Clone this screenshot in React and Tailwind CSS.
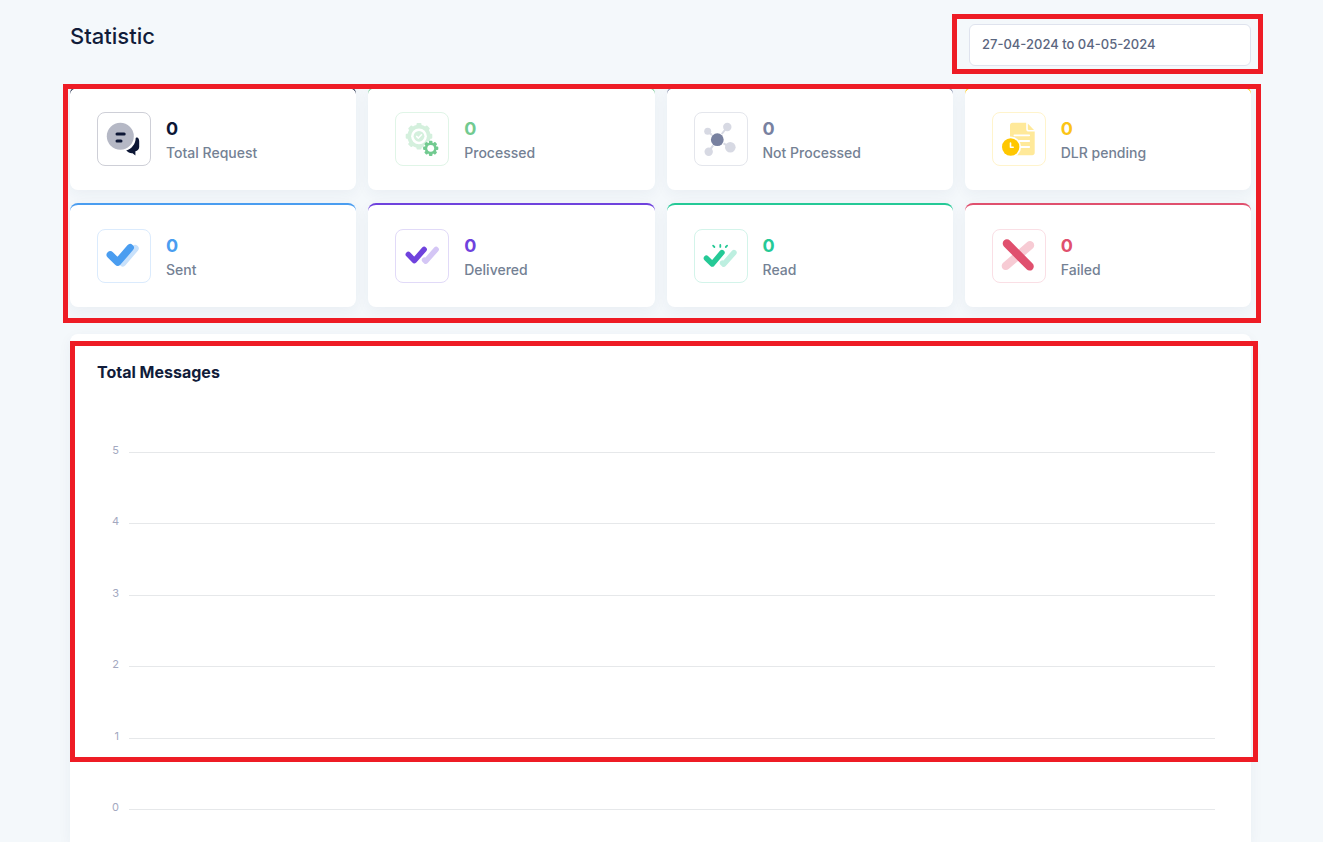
import { useState } from "react";

const TICKS = [5, 4, 3, 2, 1, 0];

const TEETH = [0, 45, 90, 135, 180, 225, 270, 315];

export default function App() {
  const [range, setRange] = useState("27-04-2024 to 04-05-2024");

  return (
    <main className="min-h-screen flex flex-col bg-[#f4f8fb] pl-[70px] pr-[72px] pt-6 font-['Inter',sans-serif] overflow-x-hidden">
      <header className="flex items-start justify-between mb-5">
        <h1 className="text-[22px] leading-6 font-medium text-[#111c3a]">
          Statistic
        </h1>

        <div className="relative w-[282px]">
          <input
            type="text"
            aria-label="Date range"
            value={range}
            onChange={(e) => setRange(e.target.value)}
            className="block w-full h-[42px] px-3 pb-0.5 rounded-md border border-[#dfe3ee] bg-white text-[13px] font-medium text-[#5b6680] outline-none"
          />
          <Highlight className="-left-[17px] -right-3 -top-[10px] -bottom-2" />
        </div>
      </header>

      <section className="relative grid grid-cols-4 gap-x-3 gap-y-[13px]">
        <StatCard label="Total Request" top="border-t-[#0c1635]" box="border-[#cecfd7]" text="text-[#0c1635]" icon={<ChatIcon />} />
        <StatCard label="Processed" top="border-t-[#72ca90]" box="border-[#e0f5e7]" text="text-[#72ca90]" icon={<GearsIcon />} />
        <StatCard label="Not Processed" top="border-t-[#7881a0]" box="border-[#e4e6ec]" text="text-[#7881a0]" icon={<NodesIcon />} />
        <StatCard label="DLR pending" top="border-t-[#ffc700]" box="border-[#fff4cc]" text="text-[#fbc416]" icon={<PendingIcon />} />
        <StatCard label="Sent" top="border-t-[#4a9df0]" box="border-[#dbebfd]" text="text-[#4a9df0]" icon={<SentIcon />} />
        <StatCard label="Delivered" top="border-t-[#6f42dd]" box="border-[#e1daf8]" text="text-[#6f42dd]" icon={<DeliveredIcon />} />
        <StatCard label="Read" top="border-t-[#25c996]" box="border-[#d3f4ea]" text="text-[#25c996]" icon={<ReadIcon />} />
        <StatCard label="Failed" top="border-t-[#e0506e]" box="border-[#fadfe5]" text="text-[#e0506e]" icon={<FailedIcon />} />
        <Highlight className="-left-[7px] -right-[10px] -top-0.5 -bottom-4" />
      </section>

      <section className="relative flex-1 mt-[27px] bg-white rounded-t-lg shadow-[0_4px_14px_rgba(30,60,90,0.05)] pt-7 pl-[27px] pr-9 pb-6">
        <h2 className="text-base leading-5 font-bold text-[#111c3a]">
          Total Messages
        </h2>

        <div className="mt-[63px] h-[372px] flex flex-col justify-between">
          {TICKS.map((tick) => (
            <div key={tick} className="flex items-center h-[15px]">
              <span className="w-[22px] mr-[10px] pb-1 text-right text-[11px] leading-[13px] text-[#a3a8bf]">
                {tick}
              </span>
              <div className="flex-1 border-t border-[#e6e8ea]" />
            </div>
          ))}
        </div>
        <Highlight className="left-0 -right-[7px] top-[7px] h-[421px]" />
      </section>
    </main>
  );
}

function Highlight({ className }) {
  return (
    <div
      className={`absolute z-10 border-5 border-[#ee1c25] pointer-events-none ${className}`}
    />
  );
}

function StatCard({ label, top, box, text, icon }) {
  return (
    <div
      className={`flex items-center gap-[15px] bg-white rounded-lg border-t-2 px-[27px] py-6 shadow-[0_4px_14px_rgba(30,60,90,0.05)] ${top}`}
    >
      <div className={`size-[54px] shrink-0 rounded-lg border ${box}`}>
        {icon}
      </div>
      <div className="pt-1">
        <p className={`text-lg leading-6 font-bold ${text}`}>0</p>
        <p className="text-sm leading-6 font-medium text-[#748194]">{label}</p>
      </div>
    </div>
  );
}

function Icon({ children }) {
  return (
    <svg
      viewBox="1 1 52 52"
      className="size-full"
      fill="none"
      strokeLinecap="round"
      strokeLinejoin="round"
      aria-hidden="true"
    >
      {children}
    </svg>
  );
}

function ChatIcon() {
  return (
    <Icon>
      <path
        d="M29.2 38.6C34.8 36.8 38.6 32 38.7 26C41 24.6 42.2 27 42.2 29.5V35C42.2 37.3 40.6 38.8 38.4 39.2V43.5L35.6 41.2C33 41.4 31 40.4 29.2 38.6Z"
        fill="#0c1635"
      />
      <circle cx="23.3" cy="24.3" r="13.5" fill="#b5b8c5" />
      <path d="M20 22H27.2M20 29H24" stroke="#0c1635" strokeWidth="3" />
    </Icon>
  );
}

function Gear({ x, y, r, tooth, color }) {
  return (
    <g transform={`translate(${x} ${y})`} fill={color}>
      <circle r={r - 1.7} />
      {TEETH.map((a) => (
        <rect
          key={a}
          x={-tooth / 2}
          y={-r}
          width={tooth}
          height={r / 2}
          rx="1"
          transform={`rotate(${a})`}
        />
      ))}
    </g>
  );
}

function GearsIcon() {
  return (
    <Icon>
      <Gear x={24} y={24.3} r={13.3} tooth={5} color="#d4f0dd" />
      <circle cx="24" cy="24.3" r="7.9" fill="#fff" />
      <circle cx="24" cy="24.3" r="5.4" fill="#d4f0dd" />
      <path d="M21.6 24.4L23.4 26.1L26.5 22.8" stroke="#fff" strokeWidth="1.5" />
      <circle cx="35.7" cy="36.3" r="7.6" fill="#fff" />
      <Gear x={35.7} y={36.3} r={7.6} tooth={3.6} color="#72ca90" />
      <circle cx="35.7" cy="36.3" r="3.4" fill="#fff" />
    </Icon>
  );
}

function NodesIcon() {
  return (
    <Icon>
      <path
        d="M13.7 19.3L23.3 27.7M33.3 15L23.3 27.7M14.7 39.7L23.3 27.7M36.3 35.3L23.3 27.7"
        stroke="#d7d9e3"
        strokeWidth="2"
      />
      <g fill="#d7d9e3">
        <circle cx="13.7" cy="19.3" r="3.5" />
        <circle cx="33.3" cy="15" r="4.2" />
        <circle cx="14.7" cy="39.7" r="4.2" />
        <circle cx="36.3" cy="35.3" r="5.3" />
      </g>
      <circle cx="23.3" cy="27.7" r="7.2" fill="#fff" />
      <circle cx="23.3" cy="27.7" r="6.4" fill="#7881a0" />
    </Icon>
  );
}

function PendingIcon() {
  return (
    <Icon>
      <path
        d="M20.5 10.7H34.2V17C34.2 18.8 35.2 19.6 37 19.6H42.7V40.8C42.7 42.3 41.7 43.3 40.2 43.3H20.5C19 43.3 18 42.3 18 40.8V13.2C18 11.7 19 10.7 20.5 10.7Z"
        fill="#ffe999"
      />
      <path d="M35.8 11.6L42 17.9H36.8C36.1 17.9 35.8 17.5 35.8 17Z" fill="#ffe999" />
      <path d="M22.4 23.3H37.2M27 29H37.2M29.5 35H37.2" stroke="#fff" strokeWidth="1.8" />
      <circle cx="18.7" cy="35" r="10.4" fill="#fff" />
      <circle cx="18.7" cy="35" r="8.7" fill="#ffc700" />
      <path d="M18.5 31V35.2H21.2" stroke="#fff" strokeWidth="1.6" />
    </Icon>
  );
}

function SentIcon() {
  return (
    <Icon>
      <path d="M38.2 19.4L25.8 34" stroke="#c8e1fb" strokeWidth="7" />
      <path d="M13.3 25.9L20.7 33.2L33.2 18.7" stroke="#4a9df0" strokeWidth="7.4" />
    </Icon>
  );
}

function DeliveredIcon() {
  return (
    <Icon>
      <path d="M41.2 20.4L30.7 32.2L29.5 31" stroke="#d4c6f5" strokeWidth="5.4" />
      <path d="M13.3 25.4L19.3 31.6L29.2 20.4" stroke="#fff" strokeWidth="7.4" />
      <path d="M13.3 25.4L19.3 31.6L29.2 20.4" stroke="#6f42dd" strokeWidth="5.4" />
    </Icon>
  );
}

function ReadIcon() {
  return (
    <Icon>
      <path d="M40 23.6L29.7 35.2L28.5 34" stroke="#bdefe0" strokeWidth="5.4" />
      <path d="M12.4 29.2L18.3 35L28 23.6" stroke="#fff" strokeWidth="7.4" />
      <path d="M12.4 29.2L18.3 35L28 23.6" stroke="#25c996" strokeWidth="5.4" />
      <path d="M19.1 16.7L20.4 18M26.3 15.9V17.9M33.1 16.7L31.8 18" stroke="#25c996" strokeWidth="1.8" />
    </Icon>
  );
}

function FailedIcon() {
  return (
    <Icon>
      <path d="M38 16.3L13.9 36.9" stroke="#f7cbd4" strokeWidth="8.4" />
      <path d="M14.9 14.5L37.6 37.4" stroke="#e0506e" strokeWidth="8.4" />
    </Icon>
  );
}
